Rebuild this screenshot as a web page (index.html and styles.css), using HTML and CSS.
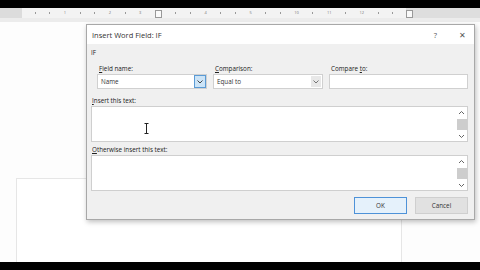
FILE: index.html
```html
<!DOCTYPE html>
<html lang="en">
<head>
    <meta charset="UTF-8">
    <title>Insert Word Field: IF</title>
    <link rel="stylesheet" href="styles.css">
</head>
<body>

<div class="screen">
    <div class="black-bar"></div>
    <div class="ruler">
        <div class="ruler-left"></div>
        <div class="ruler-mid">
            <span class="tick"></span><span class="tick"></span><span class="num">1</span><span class="tick"></span>
            <span class="tick"></span><span class="num">2</span><span class="tick"></span><span class="num">3</span>
            <span class="marker"></span><span class="tick"></span><span class="tick"></span><span class="num">4</span>
            <span class="tick"></span><span class="tick"></span><span class="num">5</span><span class="tick"></span>
            <span class="tick"></span><span class="num">10</span><span class="tick"></span><span class="num">11</span>
            <span class="tick"></span><span class="num">12</span><span class="tick"></span><span class="tick"></span>
        </div>
        <div class="ruler-right"><span class="marker"></span></div>
    </div>
    <div class="workspace">
        <div class="page"></div>
    </div>
    <div class="black-bar bottom"></div>

    <!-- dialog window over the document -->
    <div class="dialog">
        <div class="titlebar">
            <span class="title">Insert Word Field: IF</span>
            <span class="help">?</span>
            <span class="close">✕</span>
        </div>
        <div class="dialog-body">
            <div class="group-label">IF</div>
            <div class="field-row">
                <div class="field f1">
                    <label><u>F</u>ield name:</label>
                    <div class="combo">
                        <span>Name</span>
                        <span class="drop active">
                            <svg width="6" height="4" viewBox="0 0 6 4"><path d="M0.5 0.5 L3 3 L5.5 0.5" fill="none" stroke="#333" stroke-width="0.9"/></svg>
                        </span>
                    </div>
                </div>
                <div class="field f2">
                    <label><u>C</u>omparison:</label>
                    <div class="combo">
                        <span>Equal to</span>
                        <span class="drop">
                            <svg width="6" height="4" viewBox="0 0 6 4"><path d="M0.5 0.5 L3 3 L5.5 0.5" fill="none" stroke="#666" stroke-width="0.9"/></svg>
                        </span>
                    </div>
                </div>
                <div class="field f3">
                    <label>Compare <u>t</u>o:</label>
                    <div class="combo"></div>
                </div>
            </div>

            <label class="area-label"><u>I</u>nsert this text:</label>
            <div class="textarea">
                <svg class="ibeam" width="5" height="11" viewBox="0 0 5 11"><path d="M0.5 0.5 H4.5 M2.5 0.5 V10.5 M0.5 10.5 H4.5" fill="none" stroke="#222" stroke-width="1"/></svg>
                <div class="scroll">
                    <svg width="7" height="5" viewBox="0 0 7 5"><path d="M1 4 L3.5 1.5 L6 4" fill="none" stroke="#555" stroke-width="0.9"/></svg>
                    <div class="thumb"></div>
                    <svg width="7" height="5" viewBox="0 0 7 5"><path d="M1 1 L3.5 3.5 L6 1" fill="none" stroke="#555" stroke-width="0.9"/></svg>
                </div>
            </div>

            <label class="area-label"><u>O</u>therwise insert this text:</label>
            <div class="textarea">
                <div class="scroll">
                    <svg width="7" height="5" viewBox="0 0 7 5"><path d="M1 4 L3.5 1.5 L6 4" fill="none" stroke="#555" stroke-width="0.9"/></svg>
                    <div class="thumb"></div>
                    <svg width="7" height="5" viewBox="0 0 7 5"><path d="M1 1 L3.5 3.5 L6 1" fill="none" stroke="#555" stroke-width="0.9"/></svg>
                </div>
            </div>

            <div class="buttons">
                <div class="btn default">OK</div>
                <div class="btn">Cancel</div>
            </div>
        </div>
    </div>
</div>

</body>
</html>
```

FILE: styles.css
```css
body, html {
    margin: 0;
    padding: 0;
    background: #fff;
    font-family: "Open Sans", "Noto Sans", sans-serif;
    color: #222;
}

.screen {
    position: relative;
    width: 480px;
    height: 270px;
    overflow: hidden;
    display: flex;
    flex-direction: column;
}

.black-bar {
    height: 8px;
    background: #000;
    flex: none;
}

.ruler {
    height: 10px;
    display: flex;
    background: #e9e9e9;
    flex: none;
}

.ruler-left {
    width: 22px;
    background: #dcdcdc;
}

.ruler-mid {
    width: 372px;
    background: #f3f3f3;
    display: flex;
    align-items: center;
    justify-content: space-around;
    padding: 0 6px;
}

.ruler-right {
    flex: 1;
    background: #dedede;
}

.tick {
    width: 1px;
    height: 2px;
    background: #999;
}

.num {
    font-size: 4px;
    color: #777;
    line-height: 4px;
}

.marker {
    display: block;
    width: 5px;
    height: 6px;
    margin-top: 2px;
    border: 1px solid #999;
    background: #fafafa;
}

.workspace {
    flex: 1;
    background: #fdfdfd;
    border-top: 4px solid #ececec;
    padding-left: 16px;
    padding-top: 156px;
}

.page {
    width: 384px;
    height: 100%;
    border: 1px solid #e6e6e6;
    border-bottom: none;
    background: #fff;
}

.black-bar.bottom {
    height: 8px;
}

.dialog {
    position: absolute;
    left: 86px;
    top: 24px;
    width: 387px;
    height: 194px;
    border: 1px solid #a8a8a8;
    background: #f0f0f0;
    box-shadow: 1px 2px 5px rgba(0, 0, 0, 0.25);
    display: flex;
    flex-direction: column;
}

.titlebar {
    height: 19px;
    background: #fff;
    display: flex;
    align-items: center;
    padding: 0 8px 0 5px;
    font-size: 7.5px;
    color: #333;
}

.title {
    flex: 1;
}

.help {
    margin-right: 22px;
    color: #555;
}

.close {
    font-size: 8px;
    color: #555;
}

.dialog-body {
    flex: 1;
    padding: 4px 6px 0 4px;
    font-size: 6.3px;
}

.group-label {
    height: 10px;
    line-height: 10px;
}

.field-row {
    display: flex;
    padding-left: 6px;
    margin-top: 6px;
}

.field label {
    display: block;
    height: 10px;
    line-height: 10px;
    padding-left: 2px;
}

.f1 { width: 110px; margin-right: 6px; }
.f2 { width: 110px; margin-right: 6px; }
.f3 { width: 139px; }

.combo {
    height: 13px;
    border: 1px solid #d0d0d0;
    background: #fff;
    display: flex;
    align-items: center;
    padding-left: 3px;
    color: #333;
}

.combo span:first-child {
    flex: 1;
}

.drop {
    width: 10px;
    height: 11px;
    margin-right: 1px;
    display: flex;
    align-items: center;
    justify-content: center;
    background: #e8e8e8;
}

.drop.active {
    background: #cce4f7;
    border: 1px solid #5b9bd5;
    height: 11px;
    margin-right: 0;
}

.area-label {
    display: block;
    height: 10px;
    line-height: 10px;
    margin-top: 7px;
    padding-left: 1px;
}

.textarea + .area-label {
    margin-top: 3px;
}

.textarea {
    position: relative;
    height: 34px;
    border: 1px solid #cfcfcf;
    background: #fff;
    display: flex;
    justify-content: flex-end;
}

.ibeam {
    position: absolute;
    left: 52px;
    top: 16px;
}

.scroll {
    width: 11px;
    display: flex;
    flex-direction: column;
    align-items: center;
    justify-content: space-between;
    padding: 3px 0 2px;
}

.thumb {
    width: 10px;
    height: 11px;
    background: #cdcdcd;
}

.buttons {
    display: flex;
    justify-content: flex-end;
    margin-top: 6px;
}

.btn {
    width: 51px;
    height: 15px;
    line-height: 15px;
    text-align: center;
    border: 1px solid #cfcfcf;
    background: #e1e1e1;
    margin-left: 8px;
    color: #333;
}

.btn.default {
    border: 1px solid #4e92d8;
    background: #e5f1fb;
}
```
